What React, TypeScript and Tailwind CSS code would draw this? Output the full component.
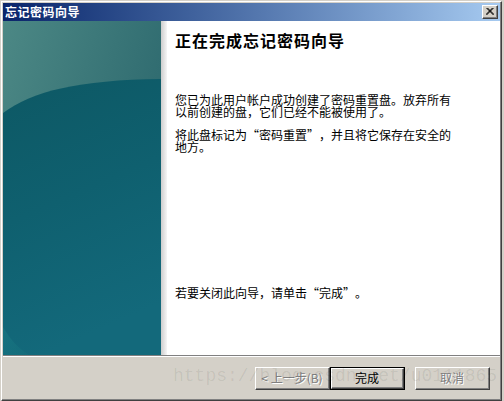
import React from "react";

function Btn({
  label,
  disabled,
  isDefault,
}: {
  label: React.ReactNode;
  disabled?: boolean;
  isDefault?: boolean;
}) {
  const inner = (
    <div className="flex-1 flex border-t border-l border-t-white border-l-white border-r border-b border-r-[#404040] border-b-[#404040]">
      <div className="flex-1 flex items-center justify-center border-r border-b border-r-[#808080] border-b-[#808080]">
        <span
          className={
            disabled
              ? "text-[12px] leading-[12px] text-[#808080] [text-shadow:1px_1px_0_#ffffff]"
              : "text-[12px] leading-[12px] text-black"
          }
        >
          {label}
        </span>
      </div>
    </div>
  );
  return (
    <div
      className={
        isDefault
          ? "w-[75px] h-[23px] flex border border-black bg-[#d4d0c8]"
          : "w-[75px] h-[23px] flex bg-[#d4d0c8]"
      }
    >
      {inner}
    </div>
  );
}

function LQ() {
  return <span className="inline-block w-[12px] text-right">“</span>;
}
function RQ() {
  return <span className="inline-block w-[12px] text-left">”</span>;
}

function SidePanel() {
  return (
    <svg width="158" height="334" viewBox="0 0 158 334" preserveAspectRatio="none" className="block">
      <defs>
        <linearGradient id="gTop" x1="0" y1="0" x2="1" y2="0.6">
          <stop offset="0" stopColor="#4c8885" />
          <stop offset="1" stopColor="#2a666c" />
        </linearGradient>
        <linearGradient id="gBot" x1="0" y1="0" x2="0.25" y2="1">
          <stop offset="0" stopColor="#0d5864" />
          <stop offset="0.5" stopColor="#0f606f" />
          <stop offset="1" stopColor="#13697b" />
        </linearGradient>
        <linearGradient id="gArc" x1="0" y1="0" x2="1" y2="1">
          <stop offset="0" stopColor="#1d8088" />
          <stop offset="1" stopColor="#15707c" />
        </linearGradient>
      </defs>
      <rect x="0" y="0" width="158" height="334" fill="url(#gTop)" />
      <path d="M0 92 C 30 70 75 59 158 58 L158 334 L0 334 Z" fill="url(#gBot)" />
      <path d="M0 306 C 7 318 15 327 26 334 L0 334 Z" fill="url(#gArc)" opacity="0.45" />
    </svg>
  );
}

export default function App() {
  return (
    <div
      lang="zh-CN"
      className="w-[504px] h-[401px] bg-[#d4d0c8] pt-[1px] pl-[1px] pr-[2px] flex flex-col relative overflow-hidden font-['Noto_Sans_CJK_SC','Noto_Sans',sans-serif]"
    >
      <div className="flex-1 flex flex-col border-l border-t border-l-white border-t-white border-r border-b border-r-[#404040] border-b-[#404040]">
        <div className="flex-1 flex flex-col pt-[1px] pl-[1px] border-r border-b border-r-[#808080] border-b-[#808080]">
          {/* Title bar */}
          <div className="h-[18px] flex items-center justify-between pl-[2px] pr-[2px] bg-gradient-to-r from-[#0a246a] to-[#a6caf0]">
            <span className="text-white font-bold text-[12px] leading-[12px] tracking-[0.5px]">忘记密码向导</span>
            <div className="w-[16px] h-[14px] flex bg-[#d4d0c8] border-t border-l border-t-white border-l-white border-r border-b border-r-[#404040] border-b-[#404040]">
              <div className="flex-1 flex items-center justify-center border-r border-b border-r-[#808080] border-b-[#808080]">
                <svg width="8" height="7" viewBox="0 0 8 7">
                  <path d="M0.5 0 L7.5 7 M1.5 0 L8 6.5 M7.5 0 L0.5 7 M6.5 0 L0 6.5" stroke="#000" strokeWidth="1" />
                </svg>
              </div>
            </div>
          </div>

          {/* Content */}
          <div className="h-[334px] flex bg-white">
            <div className="w-[158px] h-[334px]">
              <SidePanel />
            </div>
            <div className="w-[6px] h-full bg-gradient-to-r from-[#cdcdcd] to-[#f6f6f6]" />
            <div className="flex-1 flex flex-col pt-[11px] pl-[8px] pb-[56px] text-black">
              <div className="text-[16px] leading-[16px] font-bold tracking-[1px]">正在完成忘记密码向导</div>
              <div className="mt-[46px] text-[12px] leading-[12px] whitespace-nowrap">
                您已为此用户帐户成功创建了密码重置盘。放弃所有
                <br />
                以前创建的盘，它们已经不能被使用了。
              </div>
              <div className="mt-[11px] text-[12px] leading-[12px] whitespace-nowrap">
                将此盘标记为<LQ />密码重置<RQ />，并且将它保存在安全的
                <br />
                地方。
              </div>
              <div className="mt-auto text-[12px] leading-[12px] whitespace-nowrap">
                若要关闭此向导，请单击<LQ />完成<RQ />。
              </div>
            </div>
          </div>

          {/* Separator */}
          <div className="h-[1px] bg-[#808080]" />
          <div className="h-[1px] bg-white" />

          {/* Button bar */}
          <div className="h-[42px] flex justify-end items-start pt-[10px] pr-[10px]">
            <Btn label="< 上一步(B)" disabled />
            <Btn label="完成" isDefault />
            <div className="w-[10px]" />
            <Btn label="取消" disabled />
          </div>
        </div>
      </div>

      {/* Watermark overlay */}
      <div className="absolute left-[173px] top-[366px] text-[18px] leading-[20px] whitespace-nowrap pointer-events-none text-black/[0.08] font-['Liberation_Mono',monospace]">
        https://blog.csdn.net/u0111865
      </div>
    </div>
  );
}
